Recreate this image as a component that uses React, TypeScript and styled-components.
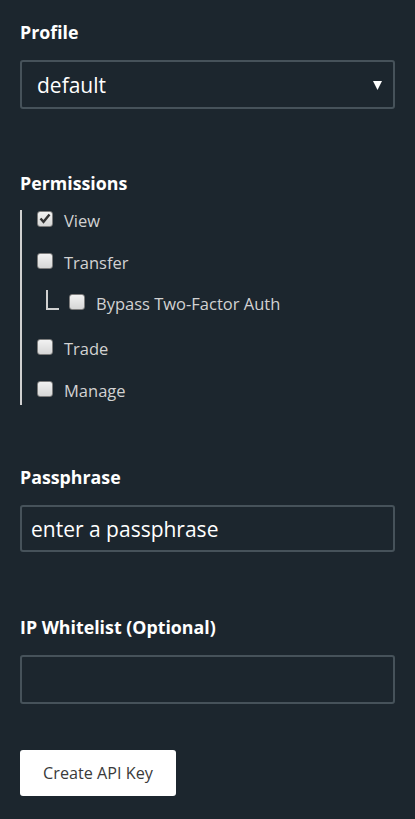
import React from "react";
import styled, { createGlobalStyle } from "styled-components";

const Global = createGlobalStyle`
  html, body { margin: 0; padding: 0; background: #1c262e; }
  body { font-family: "Open Sans", "Liberation Sans", sans-serif; }
  * { box-sizing: border-box; }
`;

const Page = styled.div`
  background: #1c262e;
  min-height: 819px;
  padding: 21px 20px 20px;
  display: flex;
  flex-direction: column;
`;

const Section = styled.div<{ $mt?: number }>`
  display: flex;
  flex-direction: column;
  margin-top: ${(p) => p.$mt ?? 0}px;
`;

const Label = styled.div<{ $mb?: number }>`
  color: #ffffff;
  font-weight: 700;
  font-size: 17.8px;
  line-height: 22px;
  margin-bottom: ${(p) => p.$mb ?? 17}px;
`;

const SelectBox = styled.div`
  height: 49px;
  border: 2px solid #46525a;
  border-radius: 3px;
  display: flex;
  align-items: center;
  justify-content: space-between;
  padding: 0 11px 0 15px;
  color: #ffffff;
  font-size: 21px;
`;

const Arrow = styled.svg`
  width: 9px;
  height: 9px;
  margin-top: 2px;
`;

const TextField = styled.input<{ $h: number }>`
  height: ${(p) => p.$h}px;
  width: 100%;
  border: 2px solid #46525a;
  border-radius: 3px;
  background: transparent;
  color: #ffffff;
  font-family: "Open Sans", "Liberation Sans", sans-serif;
  font-size: 21px;
  padding: 0 9px;
  outline: none;
  &::placeholder { color: #ffffff; opacity: 1; }
`;

const Tree = styled.div`
  border-left: 2px solid #d0d0d0;
  margin-top: 16px;
  padding: 0 0 5px 15px;
  display: flex;
  flex-direction: column;
`;

const Row = styled.label<{ $mt: number; $sub?: boolean }>`
  display: flex;
  align-items: center;
  height: 20px;
  margin-top: ${(p) => p.$mt}px;
  color: #d2d2d2;
  font-size: 16.5px;
  gap: 11px;
  padding-left: ${(p) => (p.$sub ? 9 : 0)}px;
`;

const Elbow = styled.span`
  width: 13px;
  height: 20px;
  border-left: 2px solid #d0d0d0;
  border-bottom: 2px solid #d0d0d0;
  margin-top: -6px;
  margin-right: -1px;
`;

const Box = styled.span`
  width: 16px;
  height: 16px;
  border: 1px solid #7d7d7d;
  border-radius: 3px;
  background: linear-gradient(#f2f2f2, #d6d6d6);
  display: flex;
  align-items: center;
  justify-content: center;
  margin-top: -3px;
  flex-shrink: 0;
`;

const Button = styled.button`
  align-self: flex-start;
  margin-top: 46px;
  height: 46px;
  width: 156px;
  padding: 0;
  background: #ffffff;
  border: none;
  border-radius: 3px;
  color: #3a3a3a;
  font-family: "Open Sans", "Liberation Sans", sans-serif;
  font-size: 16.2px;
`;

const Check = ({ checked }: { checked?: boolean }) => (
  <Box>
    {checked && (
      <svg width="12" height="11" viewBox="0 0 12 11">
        <path d="M1.5 5.5 L4.5 8.8 L10.5 1.5" fill="none" stroke="#333" strokeWidth="2.4" />
      </svg>
    )}
  </Box>
);

export default function App() {
  return (
    <>
      <Global />
      <Page>
        <Section>
          <Label>Profile</Label>
          <SelectBox>
            <span>default</span>
            <Arrow viewBox="0 0 9 9">
              <path d="M0 0 H9 L4.5 9 Z" fill="#fff" />
            </Arrow>
          </SelectBox>
        </Section>

        <Section $mt={63}>
          <Label $mb={0}>Permissions</Label>
          <Tree>
            <Row $mt={0}><Check checked />View</Row>
            <Row $mt={22}><Check />Transfer</Row>
            <Row $mt={21} $sub><Elbow /><Check />Bypass Two-Factor Auth</Row>
            <Row $mt={25}><Check />Trade</Row>
            <Row $mt={22}><Check />Manage</Row>
          </Tree>
        </Section>

        <Section $mt={61}>
          <Label>Passphrase</Label>
          <TextField $h={47} placeholder="enter a passphrase" />
        </Section>

        <Section $mt={64}>
          <Label>IP Whitelist (Optional)</Label>
          <TextField $h={49} />
        </Section>

        <Button>Create API Key</Button>
      </Page>
    </>
  );
}
